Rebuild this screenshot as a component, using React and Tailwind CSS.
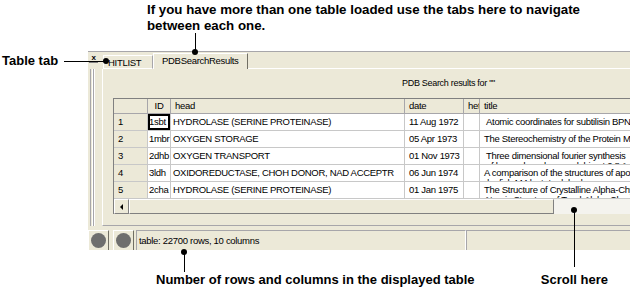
import React from 'react';

const ui = { fontFamily: '"Liberation Sans", Arial, sans-serif' };

const rows = [
  { n: '1', id: '1sbt', head: 'HYDROLASE (SERINE PROTEINASE)', date: '11 Aug 1972', title: "Atomic coordinates for subtilisin BPN'", more: '', focus: true, tpad: 'pl-[6px]' },
  { n: '2', id: '1mbr', head: 'OXYGEN STORAGE', date: '05 Apr 1973', title: 'The Stereochemistry of the Protein Myoglobin', more: '' },
  { n: '3', id: '2dhb', head: 'OXYGEN TRANSPORT', date: '01 Nov 1973', title: 'Three dimensional fourier synthesis', more: 'of horse deoxyhaemoglobin at 2.8 Angstrom', tpad: 'pl-[6px]' },
  { n: '4', id: '3ldh', head: 'OXIDOREDUCTASE, CHOH DONOR, NAD ACCEPTR', date: '06 Jun 1974', title: 'A comparison of the structures of apo', more: 'dogfish M4 lactate dehydrogenase' },
  { n: '5', id: '2cha', head: 'HYDROLASE (SERINE PROTEINASE)', date: '01 Jan 1975', title: 'The Structure of Crystalline Alpha-Chymotrypsin', more: 'Atomic Structure of Tosyl-Alpha-Chym' },
];

const Dot = ({ className }) => (
  <div className={`absolute w-[6px] h-[6px] rounded-full bg-black ${className}`} />
);

const HeadCell = ({ w, children, className = '' }) => (
  <div className={`${w} h-full shrink-0 bg-[#ECE9D8] border-r border-b border-[#a7a6aa] px-[4px] flex items-center overflow-hidden whitespace-nowrap ${className}`}>
    {children}
  </div>
);

const Cell = ({ w, children, className = '' }) => (
  <div className={`${w} h-full shrink-0 bg-white border-r border-b border-[#c8c8c8] overflow-hidden whitespace-nowrap ${className}`}>
    {children}
  </div>
);

function DataTable() {
  return (
    <div className="ml-[10px] h-[116px] border-t border-l border-[#808080] bg-[#ECE9D8] flex flex-col overflow-hidden">
      <div className="h-[15px] flex shrink-0">
        <HeadCell w="w-[34px]" />
        <HeadCell w="w-[23px]" className="justify-center px-0">ID</HeadCell>
        <HeadCell w="w-[234px]">head</HeadCell>
        <HeadCell w="w-[59px]">date</HeadCell>
        <HeadCell w="w-[16px]" className="px-[2px]">het</HeadCell>
        <HeadCell w="w-[300px]">title</HeadCell>
      </div>
      {rows.map((r) => (
        <div key={r.n} className="h-[17px] flex shrink-0">
          <HeadCell w="w-[34px]" className="border-[#c8c8c8]">{r.n}</HeadCell>
          <Cell w="w-[23px]" className="relative pl-[1px] leading-[16px]">
            {r.id}
            {r.focus && <div className="absolute inset-0 border-2 border-black" />}
          </Cell>
          <Cell w="w-[234px]" className="pl-[2px] leading-[16px]">{r.head}</Cell>
          <Cell w="w-[59px]" className="pl-[4px] leading-[16px]">{r.date}</Cell>
          <Cell w="w-[16px]" />
          <Cell w="w-[300px]" className={`${r.tpad || 'pl-[4px]'} leading-[10px] pt-[3px]`}>
            <div>{r.title}</div>
            <div>{r.more}</div>
          </Cell>
        </div>
      ))}
      <div className="h-[15px] flex shrink-0">
        <div className="w-[15px] h-full shrink-0 bg-[#ECE9D8] border-t border-l border-white border-r border-b border-r-[#808080] border-b-[#808080] flex items-center justify-center">
          <div className="w-0 h-0 border-y-[3px] border-y-transparent border-r-[3px] border-r-black" />
        </div>
        <div className="w-[425px] h-full shrink-0 bg-[#ECE9D8] border-t border-l border-white border-r border-b border-r-[#808080] border-b-[#808080]" />
        <div className="flex-1 h-full bg-[#F4F3EE]" />
      </div>
    </div>
  );
}

function Window() {
  return (
    <div className="ml-[88px] w-[542px] h-[199px] bg-[#ECE9D8] border-t border-[#a7a6aa] flex flex-col overflow-hidden text-[9.5px] tracking-[-0.3px] text-black" style={ui}>
      {/* tab strip */}
      <div className="h-[17px] flex items-end shrink-0">
        <div className="self-start mt-[2px] ml-[1px] w-[9px] h-[9px] border-b border-[#808080] flex items-center justify-center text-[8px] leading-none font-bold">
          x
        </div>
        <div className="ml-[5px] w-[50px] h-[14px] border-t border-l border-white border-r border-r-[#a7a6aa] border-b border-b-white pl-[4px] leading-[13px]">
          HITLIST
        </div>
        <div className="w-[95px] h-[16px] border-t border-l border-white border-r border-r-[#716f64] pl-[8px] leading-[14px]">
          PDBSearchResults
        </div>
        <div className="flex-1 border-b border-white" />
      </div>
      {/* body */}
      <div className="h-[157px] flex shrink-0">
        <div className="w-[14px] shrink-0 flex pl-[2px]">
          <div className="w-[3px] border-l border-[#a7a6aa] border-r border-r-white" />
          <div className="w-[2px] border-l border-[#a7a6aa] border-r border-r-white" />
        </div>
        <div className="flex-1 flex flex-col border-l border-white border-b border-b-[#a7a6aa]">
          <div className="h-[29px] shrink-0 pl-[299px] pt-[8px] text-[9px] leading-[12px]">PDB Search results for ""</div>
          <DataTable />
        </div>
      </div>
      {/* status bar */}
      <div className="mt-[4px] h-[21px] flex shrink-0">
        {[0, 1].map((i) => (
          <div key={i} className={`w-[21px] h-[21px] shrink-0 border-t border-l border-white border-r border-b border-r-[#716f64] border-b-[#716f64] flex items-center justify-center ${i ? 'ml-[4px]' : ''}`}>
            <div className="w-[15px] h-[15px] rounded-full bg-[#6e6e6e]" />
          </div>
        ))}
        <div className="ml-[2px] w-[330px] h-full border-t border-l border-[#a7a6aa] border-r border-r-white pl-[2px] leading-[19px]">
          table: 22700 rows, 10 columns
        </div>
        <div className="flex-1 h-full border-t border-l border-[#a7a6aa]" />
      </div>
    </div>
  );
}

export default function App() {
  return (
    <div className="relative w-[630px] h-[303px] bg-white overflow-hidden text-black" style={ui}>
      <div className="h-[51px] pl-[147px] pt-[2px] text-[13.3px] leading-[16px] font-bold">
        <div>If you have more than one table loaded use the tabs here to navigate</div>
        <div>between each one.</div>
      </div>
      <Window />
      <div className="flex mt-[22px] text-[13px] leading-[16px] font-bold">
        <div className="ml-[156px]">Number of rows and columns in the displayed table</div>
        <div className="ml-auto mr-[22px]">Scroll here</div>
      </div>

      {/* callouts */}
      <div className="absolute left-[2px] top-[53px] text-[13px] leading-[16px] font-bold">Table tab</div>
      <div className="absolute left-[64px] top-[61px] w-[40px] h-px bg-black" />
      <Dot className="left-[103px] top-[58px]" />

      <div className="absolute left-[195px] top-[33px] w-px h-[19px] bg-black" />
      <Dot className="left-[192px] top-[49px]" />

      <div className="absolute left-[184px] top-[252px] w-px h-[20px] bg-black" />
      <Dot className="left-[181px] top-[249px]" />

      <div className="absolute left-[574px] top-[210px] w-px h-[57px] bg-black" />
      <Dot className="left-[571px] top-[207px]" />
    </div>
  );
}
